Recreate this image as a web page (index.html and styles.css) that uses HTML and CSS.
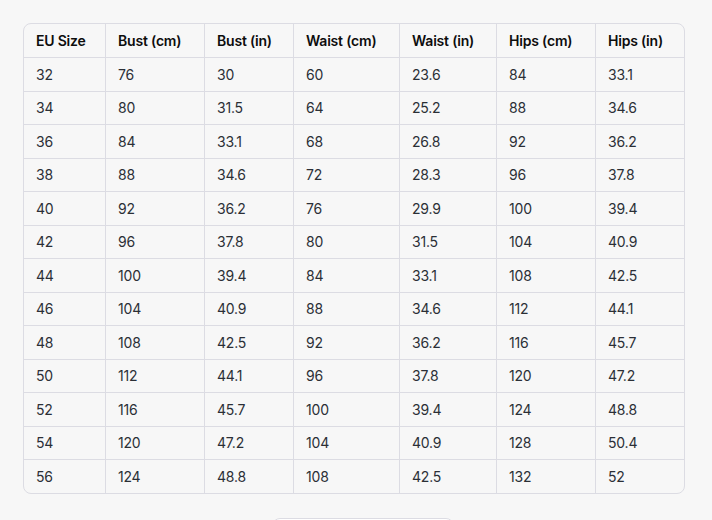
FILE: index.html
```html
<!DOCTYPE html>
<html>
<head>
<meta charset="utf-8">
<link rel="stylesheet" href="styles.css">
</head>
<body>
<div class="page">
  <div class="table-wrap">
    <table class="size-table">
      <colgroup>
        <col class="c1"><col class="c2"><col class="c3"><col class="c4"><col class="c5"><col class="c6"><col class="c7">
      </colgroup>
      <thead>
        <tr><th>EU Size</th><th>Bust (cm)</th><th>Bust (in)</th><th>Waist (cm)</th><th>Waist (in)</th><th>Hips (cm)</th><th>Hips (in)</th></tr>
      </thead>
      <tbody>
        <tr><td>32</td><td>76</td><td>30</td><td>60</td><td>23.6</td><td>84</td><td>33.1</td></tr>
        <tr><td>34</td><td>80</td><td>31.5</td><td>64</td><td>25.2</td><td>88</td><td>34.6</td></tr>
        <tr><td>36</td><td>84</td><td>33.1</td><td>68</td><td>26.8</td><td>92</td><td>36.2</td></tr>
        <tr><td>38</td><td>88</td><td>34.6</td><td>72</td><td>28.3</td><td>96</td><td>37.8</td></tr>
        <tr><td>40</td><td>92</td><td>36.2</td><td>76</td><td>29.9</td><td>100</td><td>39.4</td></tr>
        <tr><td>42</td><td>96</td><td>37.8</td><td>80</td><td>31.5</td><td>104</td><td>40.9</td></tr>
        <tr><td>44</td><td>100</td><td>39.4</td><td>84</td><td>33.1</td><td>108</td><td>42.5</td></tr>
        <tr><td>46</td><td>104</td><td>40.9</td><td>88</td><td>34.6</td><td>112</td><td>44.1</td></tr>
        <tr><td>48</td><td>108</td><td>42.5</td><td>92</td><td>36.2</td><td>116</td><td>45.7</td></tr>
        <tr><td>50</td><td>112</td><td>44.1</td><td>96</td><td>37.8</td><td>120</td><td>47.2</td></tr>
        <tr><td>52</td><td>116</td><td>45.7</td><td>100</td><td>39.4</td><td>124</td><td>48.8</td></tr>
        <tr><td>54</td><td>120</td><td>47.2</td><td>104</td><td>40.9</td><td>128</td><td>50.4</td></tr>
        <tr><td>56</td><td>124</td><td>48.8</td><td>108</td><td>42.5</td><td>132</td><td>52</td></tr>
      </tbody>
    </table>
  </div>
  <div class="copy-box"></div>
</div>
</body>
</html>
```
FILE: styles.css
```css
html, body {
  margin: 0;
  padding: 0;
  background: #f7f7f7;
  height: 100%;
  overflow: hidden;
}
.page {
  padding: 23px 27px 0 23px;
  display: flex;
  flex-direction: column;
  align-items: flex-start;
  font-family: Inter, "Noto Sans", sans-serif;
  font-size: 14px;
  color: #2b2f36;
}
.table-wrap {
  width: 662px;
  border: 1px solid #dcdce3;
  border-radius: 8px;
  overflow: hidden;
  box-sizing: border-box;
  background: #f7f7f7;
}
.size-table {
  width: 100%;
  border-collapse: separate;
  border-spacing: 0;
  table-layout: fixed;
}
.c1 { width: 82px; }
.c2 { width: 99px; }
.c3 { width: 89px; }
.c4 { width: 106px; }
.c5 { width: 97px; }
.c6 { width: 99px; }
.c7 { width: auto; }
.size-table th,
.size-table td {
  text-align: left;
  padding: 0 0 0 12px;
  border-right: 1px solid #dcdce3;
  border-bottom: 1px solid #dcdce3;
  white-space: nowrap;
  letter-spacing: -0.2px;
}
.size-table th {
  height: 33px;
  font-weight: 600;
  color: #0d0d0d;
}
.size-table td {
  height: 32.5px;
}
.size-table th:last-child,
.size-table td:last-child {
  border-right: none;
}
.size-table tbody tr:last-child td {
  border-bottom: none;
}
.copy-box {
  margin: 24px 0 0 249px;
  width: 180px;
  height: 20px;
  background: #ffffff;
  border: 1px solid #dcdce3;
  border-radius: 8px;
}
```
